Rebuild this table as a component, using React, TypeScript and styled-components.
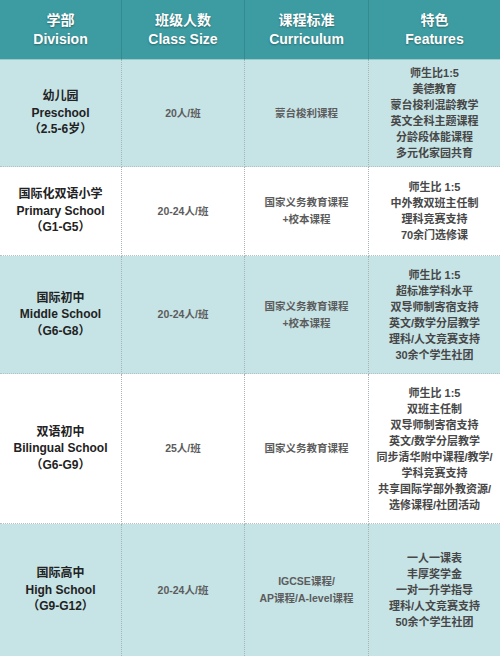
import styled, { createGlobalStyle } from "styled-components";

const GlobalStyle = createGlobalStyle`
  html, body {
    margin: 0;
    padding: 0;
    background: #ffffff;
  }
  body {
    font-family: "Liberation Sans", "Noto Sans CJK SC", sans-serif;
  }
`;

type Row = {
  height: number;
  tint: boolean;
  division: string[];
  size: string;
  curriculum: string[];
  features: string[];
};

const rows: Row[] = [
  {
    height: 107,
    tint: true,
    division: ["幼儿园", "Preschool", "（2.5-6岁）"],
    size: "20人/班",
    curriculum: ["蒙台梭利课程"],
    features: [
      "师生比1:5",
      "美德教育",
      "蒙台梭利混龄教学",
      "英文全科主题课程",
      "分龄段体能课程",
      "多元化家园共育",
    ],
  },
  {
    height: 89,
    tint: false,
    division: ["国际化双语小学", "Primary School", "（G1-G5）"],
    size: "20-24人/班",
    curriculum: ["国家义务教育课程", "+校本课程"],
    features: ["师生比 1:5", "中外教双班主任制", "理科竞赛支持", "70余门选修课"],
  },
  {
    height: 118,
    tint: true,
    division: ["国际初中", "Middle School", "（G6-G8）"],
    size: "20-24人/班",
    curriculum: ["国家义务教育课程", "+校本课程"],
    features: [
      "师生比 1:5",
      "超标准学科水平",
      "双导师制寄宿支持",
      "英文/数学分层教学",
      "理科/人文竞赛支持",
      "30余个学生社团",
    ],
  },
  {
    height: 150,
    tint: false,
    division: ["双语初中", "Bilingual School", "（G6-G9）"],
    size: "25人/班",
    curriculum: ["国家义务教育课程"],
    features: [
      "师生比 1:5",
      "双班主任制",
      "双导师制寄宿支持",
      "英文/数学分层教学",
      "同步清华附中课程/教学/",
      "学科竞赛支持",
      "共享国际学部外教资源/",
      "选修课程/社团活动",
    ],
  },
  {
    height: 132,
    tint: true,
    division: ["国际高中", "High School", "（G9-G12）"],
    size: "20-24人/班",
    curriculum: ["IGCSE课程/", "AP课程/A-level课程"],
    features: [
      "一人一课表",
      "丰厚奖学金",
      "一对一升学指导",
      "理科/人文竞赛支持",
      "50余个学生社团",
    ],
  },
];

const headers = [
  ["学部", "Division"],
  ["班级人数", "Class Size"],
  ["课程标准", "Curriculum"],
  ["特色", "Features"],
];

const App = () => {
  return (
    <>
      <GlobalStyle />
      <Table $rows={rows.map((r) => r.height)}>
        {headers.map((h, i) => (
          <HeadCell key={h[1]} $last={i === headers.length - 1}>
            <span>{h[0]}</span>
            <span>{h[1]}</span>
          </HeadCell>
        ))}
        {rows.map((row, ri) => {
          const last = ri === rows.length - 1;
          return [
            <Cell key={`d${ri}`} $tint={row.tint} $bottom={!last}>
              {row.division.map((t) => (
                <DivisionLine key={t}>{t}</DivisionLine>
              ))}
            </Cell>,
            <Cell key={`s${ri}`} $tint={row.tint} $bottom={!last}>
              <PlainLine>{row.size}</PlainLine>
            </Cell>,
            <Cell key={`c${ri}`} $tint={row.tint} $bottom={!last}>
              {row.curriculum.map((t) => (
                <PlainLine key={t}>{t}</PlainLine>
              ))}
            </Cell>,
            <Cell key={`f${ri}`} $tint={row.tint} $bottom={!last} $last>
              {row.features.map((t) => (
                <FeatureLine key={t}>{t}</FeatureLine>
              ))}
            </Cell>,
          ];
        })}
      </Table>
    </>
  );
};

const Table = styled.div<{ $rows: number[] }>`
  display: grid;
  width: 500px;
  grid-template-columns: 122px 123px 124px 1fr;
  grid-template-rows: 60px ${(p) => p.$rows.map((h) => `${h}px`).join(" ")};
  overflow: hidden;
`;

const HeadCell = styled.div<{ $last?: boolean }>`
  display: flex;
  flex-direction: column;
  align-items: center;
  justify-content: center;
  background: #3d9ca2;
  color: #ffffff;
  font-size: 14px;
  font-weight: 700;
  line-height: 19px;
  text-shadow: 0 1px 2px rgba(0, 0, 0, 0.35);
  border-right: ${(p) => (p.$last ? "none" : "1px solid #358a8f")};
  border-bottom: 1px solid #9ac9cc;
  padding-top: 1px;
`;

const Cell = styled.div<{ $tint: boolean; $bottom: boolean; $last?: boolean }>`
  display: flex;
  flex-direction: column;
  align-items: center;
  justify-content: center;
  text-align: center;
  background: ${(p) => (p.$tint ? "#c6e3e6" : "#ffffff")};
  border-right: ${(p) => (p.$last ? "none" : "1px dotted #a9b3b5")};
  border-bottom: ${(p) => (p.$bottom ? "1px dotted #b4c4c6" : "none")};
`;

const DivisionLine = styled.div`
  font-size: 12px;
  line-height: 16.5px;
  font-weight: 700;
  color: #222222;
`;

const PlainLine = styled.div`
  font-size: 10.5px;
  line-height: 17px;
  font-weight: 700;
  color: #5c5c5c;
`;

const FeatureLine = styled.div`
  font-size: 11px;
  line-height: 16px;
  font-weight: 700;
  color: #474747;
`;

export default App;
